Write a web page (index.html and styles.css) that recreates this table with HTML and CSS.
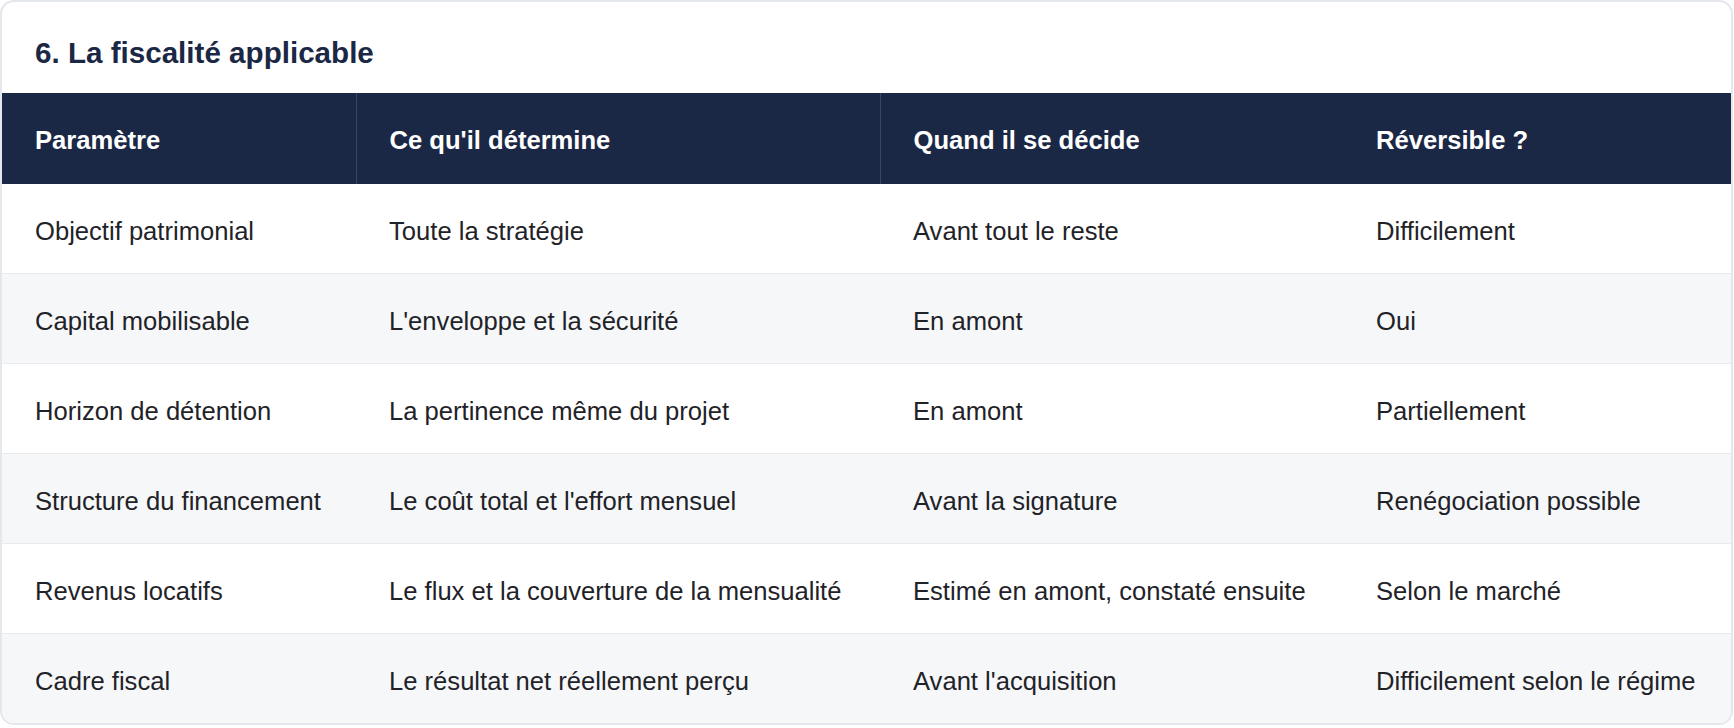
FILE: index.html
```html
<!DOCTYPE html>
<html lang="fr">
<head>
<meta charset="utf-8">
<title>La fiscalité applicable</title>
<link rel="stylesheet" href="styles.css">
</head>
<body>
<section class="card">
  <h2 class="card-title">6. La fiscalité applicable</h2>
  <table class="grid">
    <colgroup>
      <col class="c1"><col class="c2"><col class="c3"><col class="c4">
    </colgroup>
    <thead>
      <tr>
        <th class="sep">Paramètre</th>
        <th class="sep">Ce qu'il détermine</th>
        <th>Quand il se décide</th>
        <th>Réversible ?</th>
      </tr>
    </thead>
    <tbody>
      <tr><td>Objectif patrimonial</td><td>Toute la stratégie</td><td>Avant tout le reste</td><td>Difficilement</td></tr>
      <tr><td>Capital mobilisable</td><td>L'enveloppe et la sécurité</td><td>En amont</td><td>Oui</td></tr>
      <tr><td>Horizon de détention</td><td>La pertinence même du projet</td><td>En amont</td><td>Partiellement</td></tr>
      <tr><td>Structure du financement</td><td>Le coût total et l'effort mensuel</td><td>Avant la signature</td><td>Renégociation possible</td></tr>
      <tr><td>Revenus locatifs</td><td>Le flux et la couverture de la mensualité</td><td>Estimé en amont, constaté ensuite</td><td>Selon le marché</td></tr>
      <tr><td>Cadre fiscal</td><td>Le résultat net réellement perçu</td><td>Avant l'acquisition</td><td>Difficilement selon le régime</td></tr>
    </tbody>
  </table>
</section>
</body>
</html>
```

FILE: styles.css
```css
* { box-sizing: border-box; }
html, body { margin: 0; padding: 0; background: #ffffff; }
body {
  font-family: "Liberation Sans", Arial, Helvetica, sans-serif;
  color: #1f2328;
}
.card {
  width: 1733px;
  border: 2px solid #e4e7eb;
  border-radius: 14px;
  overflow: hidden;
  background: #ffffff;
}
.card-title {
  margin: 0;
  padding: 33px 33px 23px;
  font-size: 29.6px;
  line-height: 35px;
  font-weight: 700;
  color: #1b2845;
}
.grid {
  width: 100%;
  border-collapse: collapse;
  table-layout: fixed;
}
.c1 { width: 354px; }
.c2 { width: 524px; }
.c3 { width: 463px; }
.c4 { width: auto; }
.grid th {
  background: #1b2845;
  color: #ffffff;
  text-align: left;
  font-size: 25.6px;
  line-height: 40px;
  font-weight: 700;
  padding: 27px 33px 24px;
  white-space: nowrap;
}
.grid th.sep { border-right: 1px solid #3b4661; }
.grid td {
  font-size: 25.6px;
  line-height: 40px;
  padding: 27px 33px 22px;
  border-bottom: 1px solid #e9ebef;
  white-space: nowrap;
  color: #1f2328;
}
.grid tbody tr:nth-child(even) td { background: #f6f7f9; }
.grid tbody tr:last-child td { border-bottom: none; }
```
